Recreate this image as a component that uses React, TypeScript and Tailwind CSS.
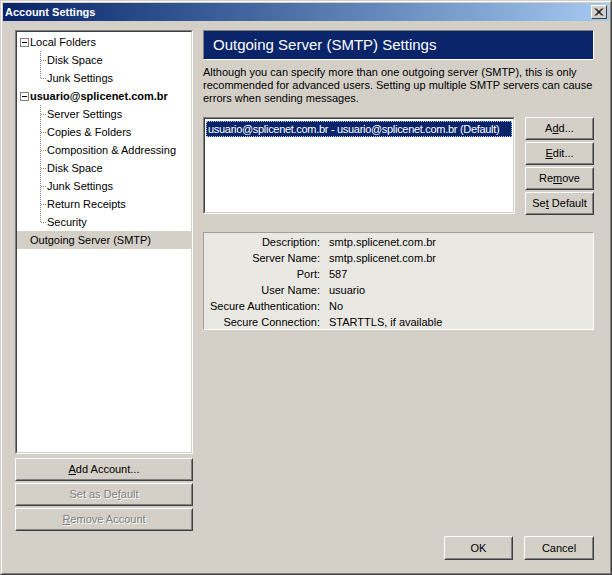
import React from "react";

const font = { fontFamily: '"Liberation Sans", Arial, sans-serif' };

function Btn({
  children,
  className = "",
  disabled = false,
}: {
  children: React.ReactNode;
  className?: string;
  disabled?: boolean;
}) {
  return (
    <div
      className={`border border-t-white border-l-white border-r-[#404040] border-b-[#404040] bg-[#d4d0c8] ${className}`}
    >
      <div className="flex h-full items-center justify-center border border-t-[#d4d0c8] border-l-[#d4d0c8] border-r-[#808080] border-b-[#808080]">
        <span
          className={
            disabled
              ? "text-[11px] text-[#808080] [text-shadow:1px_1px_0_#fff]"
              : "text-[11px] text-black"
          }
        >
          {children}
        </span>
      </div>
    </div>
  );
}

function Sunken({ children, className = "" }: { children: React.ReactNode; className?: string }) {
  return (
    <div
      className={`border border-t-[#808080] border-l-[#808080] border-r-white border-b-white ${className}`}
    >
      <div className="h-full border border-t-[#404040] border-l-[#404040] border-r-[#d4d0c8] border-b-[#d4d0c8] bg-white">
        {children}
      </div>
    </div>
  );
}

function Expander() {
  return (
    <svg width="9" height="9" viewBox="0 0 9 9" className="shrink-0">
      <rect x="0.5" y="0.5" width="8" height="8" fill="#fff" stroke="#808080" />
      <line x1="2" y1="4.5" x2="7" y2="4.5" stroke="#000" />
    </svg>
  );
}

function Child({ label, last = false }: { label: string; last?: boolean }) {
  return (
    <div className="flex h-[18px] items-center pl-[23px]">
      <svg width="7" height="18" viewBox="0 0 7 18" className="shrink-0">
        <line
          x1="0.5"
          y1="0"
          x2="0.5"
          y2={last ? 9 : 18}
          stroke="#808080"
          strokeDasharray="1 1"
        />
        <line x1="1" y1="9.5" x2="6" y2="9.5" stroke="#808080" strokeDasharray="1 1" />
      </svg>
      <span className="text-[11px] text-black">{label}</span>
    </div>
  );
}

function U({ children }: { children: React.ReactNode }) {
  return <span className="underline underline-offset-1">{children}</span>;
}

const details: [string, string][] = [
  ["Description:", "smtp.splicenet.com.br"],
  ["Server Name:", "smtp.splicenet.com.br"],
  ["Port:", "587"],
  ["User Name:", "usuario"],
  ["Secure Authentication:", "No"],
  ["Secure Connection:", "STARTTLS, if available"],
];

export default function App() {
  return (
    <div style={font} className="h-[575px] w-[612px] select-none bg-[#d4d0c8]">
      <div className="h-full border border-t-[#d4d0c8] border-l-[#d4d0c8] border-r-[#404040] border-b-[#404040]">
        <div className="flex h-full flex-col border border-t-white border-l-white border-r-[#808080] border-b-[#808080] p-px">
          {/* title bar */}
          <div className="flex h-[18px] items-center justify-between bg-gradient-to-r from-[#0a246a] to-[#a6caf0] pl-[2px] pr-[2px]">
            <span className="text-[11px] font-bold text-white">Account Settings</span>
            <div className="h-[14px] w-[16px] border border-t-white border-l-white border-r-[#404040] border-b-[#404040] bg-[#d4d0c8]">
              <svg width="14" height="12" viewBox="0 0 14 12">
                <path d="M3 2.5 L10 9.5 M4 2.5 L11 9.5 M10 2.5 L3 9.5 M11 2.5 L4 9.5" stroke="#000" strokeWidth="1" />
              </svg>
            </div>
          </div>

          {/* body */}
          <div className="flex flex-1 flex-col pl-[12px] pr-[15px] pt-[9px]">
            <div className="flex gap-[10px]">
              {/* left column */}
              <div className="flex w-[178px] flex-col">
                <Sunken className="h-[424px]">
                  <div className="pt-px">
                    <div className="flex h-[18px] items-center pl-[3px]">
                      <Expander />
                      <span className="ml-[1px] text-[11px] text-black">Local Folders</span>
                    </div>
                    <Child label="Disk Space" />
                    <Child label="Junk Settings" last />
                    <div className="flex h-[18px] items-center pl-[3px]">
                      <Expander />
                      <span className="ml-[1px] text-[11px] font-bold text-black">usuario@splicenet.com.br</span>
                    </div>
                    <Child label="Server Settings" />
                    <Child label="Copies & Folders" />
                    <Child label="Composition & Addressing" />
                    <Child label="Disk Space" />
                    <Child label="Junk Settings" />
                    <Child label="Return Receipts" />
                    <Child label="Security" last />
                    <div className="flex h-[18px] items-center bg-[#d4d0c8] pl-[13px]">
                      <span className="text-[11px] text-black">Outgoing Server (SMTP)</span>
                    </div>
                  </div>
                </Sunken>
                <div className="mt-[4px] flex flex-col gap-[2px]">
                  <Btn className="h-[23px]">
                    <U>A</U>dd Account...
                  </Btn>
                  <Btn className="h-[23px]" disabled>
                    Set as De<U>f</U>ault
                  </Btn>
                  <Btn className="h-[23px]" disabled>
                    <U>R</U>emove Account
                  </Btn>
                </div>
              </div>

              {/* right column */}
              <div className="flex w-[391px] flex-col">
                <div className="flex h-[30px] items-center border border-t-[#808080] border-l-[#808080] border-r-white border-b-white bg-[#0a246a] pl-[9px]">
                  <span className="text-[15px] text-white">Outgoing Server (SMTP) Settings</span>
                </div>
                <p className="mt-[6px] text-[11px] leading-[13px] text-black">
                  Although you can specify more than one outgoing server (SMTP), this is only
                  recommended for advanced users. Setting up multiple SMTP servers can cause
                  errors when sending messages.
                </p>
                <div className="mt-[12px] flex gap-[10px]">
                  <Sunken className="h-[97px] w-[312px]">
                    <div className="px-px pt-[2px]">
                      <div className="flex h-[16px] items-center border border-dotted border-[#a6caf0] bg-[#0a246a] pl-px">
                        <span className="whitespace-nowrap text-[11px] tracking-[-0.3px] text-white">
                          usuario@splicenet.com.br - usuario@splicenet.com.br (Default)
                        </span>
                      </div>
                    </div>
                  </Sunken>
                  <div className="flex w-[69px] flex-col gap-[2px]">
                    <Btn className="h-[23px]">
                      A<U>d</U>d...
                    </Btn>
                    <Btn className="h-[23px]">
                      <U>E</U>dit...
                    </Btn>
                    <Btn className="h-[23px]">
                      Re<U>m</U>ove
                    </Btn>
                    <Btn className="h-[23px]">
                      Se<U>t</U> Default
                    </Btn>
                  </div>
                </div>
                <div className="mt-[17px] flex h-[98px] flex-col border border-t-[#a0a0a0] border-l-[#a0a0a0] border-r-white border-b-white bg-[#eae8e3] pt-px">
                  {details.map(([k, v]) => (
                    <div key={k} className="flex h-[16px] items-center">
                      <span className="w-[116px] whitespace-nowrap text-right text-[11px] text-black">{k}</span>
                      <span className="ml-[9px] text-[11px] text-black">{v}</span>
                    </div>
                  ))}
                </div>
              </div>
            </div>

            {/* footer */}
            <div className="mt-auto mb-[12px] flex justify-end gap-[11px]">
              <Btn className="h-[24px] w-[69px]">OK</Btn>
              <Btn className="h-[24px] w-[70px]">Cancel</Btn>
            </div>
          </div>
        </div>
      </div>
    </div>
  );
}
